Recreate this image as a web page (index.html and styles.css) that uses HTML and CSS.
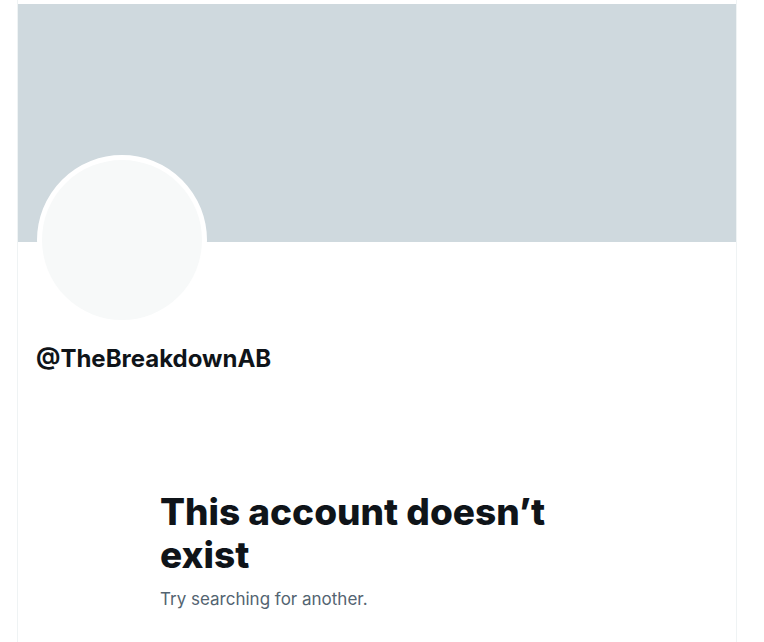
FILE: index.html
```html
<!DOCTYPE html>
<html lang="en">
<head>
    <meta charset="UTF-8">
    <meta name="viewport" content="width=device-width, initial-scale=1.0">
    <title>Profile / X</title>
    <link rel="stylesheet" href="styles.css">
</head>
<body>
    <div id="column">
        <div class="banner"></div>
        <div class="profile">
            <div class="avatar"></div>
            <div class="handle">@TheBreakdownAB</div>
        </div>
        <div class="empty-state">
            <h1>This account doesn’t exist</h1>
            <p>Try searching for another.</p>
        </div>
    </div>
</body>
</html>
```

FILE: styles.css
```css
body {
    font-family: Inter, "Noto Sans", Arial, sans-serif;
    margin: 0;
    background-color: #ffffff;
    color: #0f1419;
}
#column {
    margin-left: 17px;
    width: 718px;
    min-height: 642px;
    padding-top: 4px;
    border-left: 1px solid #eff3f4;
    border-right: 1px solid #eff3f4;
    box-sizing: content-box;
}
.banner {
    height: 238px;
    background-color: #cfd9de;
}
.profile {
    padding: 0 19px;
}
.avatar {
    width: 160px;
    height: 160px;
    margin-top: -87px;
    border: 5px solid #ffffff;
    border-radius: 50%;
    background-color: #f7f9f9;
}
.handle {
    margin-top: 20px;
    margin-left: -1px;
    font-size: 24px;
    line-height: 28px;
    font-weight: 700;
}
.empty-state {
    margin: 117px 0 0 142px;
    max-width: 470px;
}
.empty-state h1 {
    margin: 0;
    font-size: 37px;
    line-height: 43px;
    font-weight: 800;
}
.empty-state p {
    margin: 12px 0 0;
    font-size: 17px;
    line-height: 22px;
    color: #536471;
}
```
